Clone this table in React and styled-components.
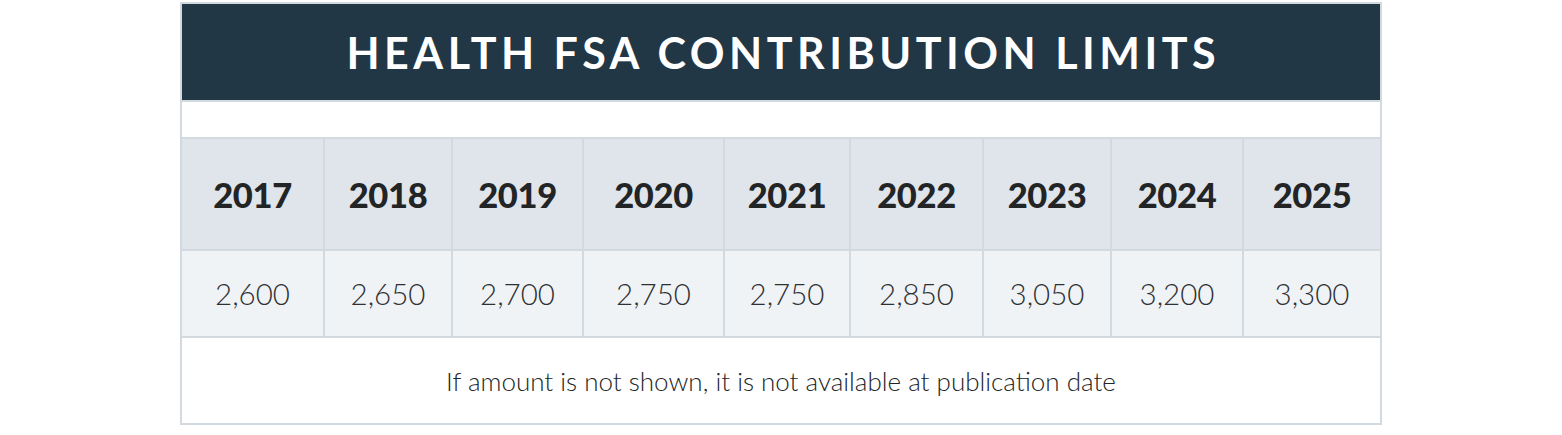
import React from "react";
import styled, {createGlobalStyle} from "styled-components";

const GlobalStyle = createGlobalStyle`
    body {
        margin: 0;
        background: #ffffff;
        font-family: "Lato", "Liberation Sans", sans-serif;
    }
`;

const line = "#d3dadf";

const years = [
    {year: "2017", amount: "2,600"},
    {year: "2018", amount: "2,650"},
    {year: "2019", amount: "2,700"},
    {year: "2020", amount: "2,750"},
    {year: "2021", amount: "2,750"},
    {year: "2022", amount: "2,850"},
    {year: "2023", amount: "3,050"},
    {year: "2024", amount: "3,200"},
    {year: "2025", amount: "3,300"},
];

const Table = styled.div`
    width: 1202px;
    box-sizing: border-box;
    margin: 2px auto 0;
    border: 2px solid ${line};
    background: #ffffff;
`;

const Title = styled.div`
    height: 96px;
    background: #213745;
    border-bottom: 2px solid ${line};
    display: flex;
    align-items: center;
    justify-content: center;
    color: #ffffff;
    font-weight: 700;
    font-size: 43px;
    letter-spacing: 0.105em;
    padding-left: 0.105em;
`;

const Spacer = styled.div`
    height: 35px;
    border-bottom: 2px solid ${line};
`;

const Grid = styled.div`
    display: grid;
    grid-template-columns: 141px 126px 129px 139px 124px 131px 126px 130px 136px;
    grid-template-rows: 110px 85px;
    gap: 2px;
    background: ${line};
    border-bottom: 2px solid ${line};
`;

const Cell = styled.div`
    display: flex;
    align-items: center;
    justify-content: center;
    background: ${p => (p.$head ? "#dfe5eb" : "#f0f3f6")};
    color: ${p => (p.$head ? "#222426" : "#2e3033")};
    font-size: ${p => (p.$head ? "34.5px" : "29.5px")};
    font-weight: ${p => (p.$head ? 900 : 300)};
    letter-spacing: ${p => (p.$head ? "-0.01em" : "0")};
`;

const Note = styled.div`
    height: 85px;
    display: flex;
    align-items: center;
    justify-content: center;
    color: #232527;
    font-size: 26px;
    font-weight: 300;
`;

const App = () => (
    <>
        <GlobalStyle/>
        <Table>
            <Title>HEALTH FSA CONTRIBUTION LIMITS</Title>
            <Spacer/>
            <Grid>
                {years.map(y => (
                    <Cell $head key={"y" + y.year}>{y.year}</Cell>
                ))}
                {years.map(y => (
                    <Cell key={"a" + y.year}>{y.amount}</Cell>
                ))}
            </Grid>
            <Note>If amount is not shown, it is not available at publication date</Note>
        </Table>
    </>
);

export default App;
